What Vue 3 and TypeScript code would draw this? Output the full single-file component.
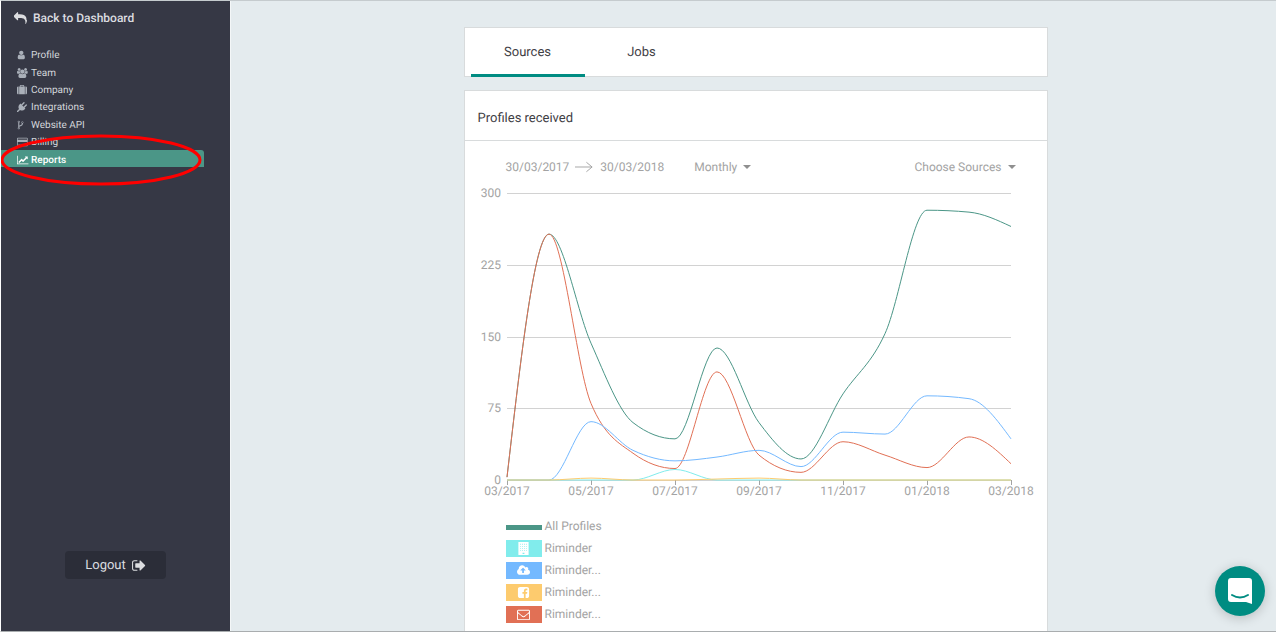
<script setup lang="ts">
import { ref } from 'vue'

interface NavItem { label: string; icon: string; box: string; active?: boolean }
interface Series { name: string; color: string; values: number[]; icon?: string; box?: string }

const icons = {
  user: 'M1280 1399q0 109-62.500 187t-150.500 78h-854q-88 0-150.500-78t-62.500-187q0-85 8.500-160.500t31.500-152 58.500-131 94-89 134.500-34.500q131 128 313 128t313-128q76 0 134.500 34.500t94 89 58.500 131 31.500 152 8.500 160.500zm-256-887q0 159-112.500 271.500t-271.500 112.500-271.500-112.500-112.500-271.500 112.500-271.500 271.500-112.500 271.500 112.500 112.500 271.500z',
  team: 'M593 896q-162 5-265 128h-134q-82 0-138-40.500t-56-118.500q0-353 124-353 6 0 43.500 21t97.500 42.500 119 21.500q67 0 133-23-5 37-5 66 0 139 81 256zm1071 637q0 120-73 189.500t-194 69.500h-874q-121 0-194-69.500t-73-189.500q0-53 3.500-103.500t14-109 26.500-108.500 43-97.500 62-81 85.500-53.500 111.500-20q10 0 43 21.500t73 48 107 48 135 21.500 135-21.500 107-48 73-48 43-21.500q61 0 111.500 20t85.500 53.500 62 81 43 97.500 26.500 108.500 14 109 3.500 103.500zm-1024-1277q0 106-75 181t-181 75-181-75-75-181 75-181 181-75 181 75 75 181zm704 384q0 159-112.500 271.500t-271.500 112.500-271.500-112.500-112.500-271.500 112.500-271.500 271.500-112.500 271.500 112.500 112.500 271.500zm576 225q0 78-56 118.500t-138 40.500h-134q-103-123-265-128 81-117 81-256 0-29-5-66 66 23 133 23 59 0 119-21.500t97.500-42.500 43.500-21q124 0 124 353zm-128-609q0 106-75 181t-181 75-181-75-75-181 75-181 181-75 181 75 75 181z',
  company: 'M640 256h512v-128h-512v128zm-352 0v1408h-64q-92 0-158-66t-66-158v-960q0-92 66-158t158-66h64zm1120 0v1408h-1024v-1408h128v-160q0-40 28-68t68-28h576q40 0 68 28t28 68v160h128zm384 224v960q0 92-66 158t-158 66h-64v-1408h64q92 0 158 66t66 158z',
  plug: 'M1755 453q37 38 37 90.500t-37 90.500l-401 400 150 150-160 160q-163 163-389.500 186.500t-411.500-100.500l-362 362h-181v-181l362-362q-124-185-100.500-411.500t186.500-389.500l160-160 150 150 400-401q38-37 91-37t90 37 37 90.500-37 90.500l-400 401 234 234 401-400q38-37 91-37t90 37z',
  fork: 'M288 1472q0-40-28-68t-68-28-68 28-28 68 28 68 68 28 68-28 28-68zm0-1152q0-40-28-68t-68-28-68 28-28 68 28 68 68 28 68-28 28-68zm640 128q0-40-28-68t-68-28-68 28-28 68 28 68 68 28 68-28 28-68zm96 0q0 52-26 96.500t-70 69.500q-2 287-226 414-67 38-203 81-128 40-169.500 71t-41.500 100v26q44 25 70 69.500t26 96.500q0 80-56 136t-136 56-136-56-56-136q0-52 26-96.500t70-69.500v-820q-44-25-70-69.500t-26-96.500q0-80 56-136t136-56 136 56 56 136q0 52-26 96.500t-70 69.500v497q54-26 154-57 55-17 87.500-29.500t70.500-31 59-39.500 40.500-51 28-69.500 8.500-91.500q-44-25-70-69.500t-26-96.500q0-80 56-136t136-56 136 56 56 136z',
  card: 'M1760 128q66 0 113 47t47 113v1216q0 66-47 113t-113 47h-1600q-66 0-113-47t-47-113v-1216q0-66 47-113t113-47h1600zm-1600 128q-13 0-22.500 9.500t-9.500 22.500v224h1664v-224q0-13-9.500-22.500t-22.500-9.500h-1600zm1600 1280q13 0 22.500-9.500t9.500-22.500v-608h-1664v608q0 13 9.500 22.500t22.500 9.500h1600zm-1504-128v-128h256v128h-256zm384 0v-128h384v128h-384z',
  chart: 'M2048 1536v128h-2048v-1536h128v1408h1920zm-128-1248v435q0 21-19.500 29.500t-35.500-7.500l-121-121-633 633q-10 10-23 10t-23-10l-233-233-416 416-192-192 585-585q10-10 23-10t23 10l233 233 464-464-121-121q-16-16-7.500-35.500t29.500-19.500h435q14 0 23 9t9 23z',
  cloud: 'M1280 864q0-14-9-23l-352-352q-9-9-23-9t-23 9l-351 351q-10 12-10 24 0 14 9 23t23 9h224v352q0 13 9.500 22.500t22.500 9.500h192q13 0 22.500-9.500t9.500-22.500v-352h224q13 0 22.500-9.500t9.500-22.500zm640 288q0 159-112.500 271.500t-271.500 112.500h-1088q-185 0-316.500-131.500t-131.500-316.500q0-130 70-240t188-165q-2-30-2-43 0-212 150-362t362-150q156 0 285.500 87t188.500 231q71-62 166-62 106 0 181 75t75 181q0 76-41 138 130 31 213.500 135.500t83.500 238.500z',
  facebook: 'M1376 128q119 0 203.500 84.500t84.500 203.500v960q0 119-84.500 203.500t-203.500 84.500h-188v-595h199l30-232h-229v-148q0-56 23.500-84t91.500-28l122-1v-207q-63-9-178-9-136 0-217.500 80t-81.500 226v171h-200v232h200v595h-532q-119 0-203.500-84.500t-84.500-203.500v-960q0-119 84.500-203.500t203.500-84.500h960z',
  mail: 'M1664 1504v-768q-32 36-69 66-268 206-426 338-51 43-83 67t-86.500 48.500-102.500 24.500h-2q-48 0-102.500-24.500t-86.500-48.500-83-67q-158-132-426-338-37-30-69-66v768q0 13 9.500 22.500t22.500 9.500h1472q13 0 22.500-9.500t9.500-22.500zm0-1051q0-37-9-53t-23-16h-1472q-13 0-22.500 9.500t-9.500 22.500q0 168 147 284 193 152 401 317 6 5 35 29.500t46 37.500 44.500 31.500 50.500 27.500 43 9h2q20 0 43-9t50.500-27.500 44.500-31.500 46-37.500 35-29.500q208-165 401-317 54-43 100.500-115.500t46.500-131.500zm128-37v1088q0 66-47 113t-113 47h-1472q-66 0-113-47t-47-113v-1088q0-66 47-113t113-47h1472q66 0 113 47t47 113z',
  building: 'M64 0h1408v1792H64zM640 1472v192h256v-192zM320 256h110v110H320zm262 0h110v110H582zm262 0h110v110H844zm262 0h110v110H1106zM320 540h110v110H320zm262 0h110v110H582zm262 0h110v110H844zm262 0h110v110H1106zM320 824h110v110H320zm262 0h110v110H582zm262 0h110v110H844zm262 0h110v110H1106zM320 1108h110v110H320zm262 0h110v110H582zm262 0h110v110H844zm262 0h110v110H1106z',
  reply: 'M1792 1120q0 166-127 451-3 7-10.500 24t-13.500 30-13 22q-12 17-28 17-15 0-23.500-10t-8.500-25q0-9 2.500-26.500t2.500-23.500q5-68 5-123 0-112-19.500-200.500t-54-153.500-89-112-117.500-79-147-48-170-24.500-189-6.500h-224v256q0 26-19 45t-45 19-45-19l-512-512q-19-19-19-45t19-45l512-512q19-19 45-19t45 19 19 45v256h224q713 0 875 403 53 134 53 333z',
  logout: 'M640 1440q0 4 1 20t.5 26.500-3 23.500-10 19.500-20.500 6.500h-320q-119 0-203.500-84.500t-84.500-203.500v-704q0-119 84.500-203.500t203.500-84.500h320q13 0 22.500 9.500t9.500 22.500q0 4 1 20t.5 26.500-3 23.500-10 19.500-20.500 6.500h-320q-66 0-113 47t-47 113v704q0 66 47 113t113 47h312l11.500 1 11.500 3 8 5.500 7 9 2 13.500zm928-544q0 26-19 45l-544 544q-19 19-45 19t-45-19-19-45v-288h-448q-26 0-45-19t-19-45v-384q0-26 19-45t45-19h448v-288q0-26 19-45t45-19 45 19l544 544q19 19 19 45z',
}

const nav: NavItem[] = [
  { label: 'Profile', icon: icons.user, box: '-128 0 1408 1792' },
  { label: 'Team', icon: icons.team, box: '0 0 1920 1792' },
  { label: 'Company', icon: icons.company, box: '0 0 1792 1792' },
  { label: 'Integrations', icon: icons.plug, box: '0 0 1792 1792' },
  { label: 'Website API', icon: icons.fork, box: '-128 0 1152 1792' },
  { label: 'Billing', icon: icons.card, box: '0 0 1920 1792' },
  { label: 'Reports', icon: icons.chart, box: '0 0 2048 1792', active: true },
]

const series: Series[] = [
  { name: 'All Profiles', color: '#4b9687', values: [3, 257, 143, 60, 43, 138, 60, 22, 90, 153, 282, 280, 265] },
  { name: 'Riminder', color: '#81ecec', values: [0, 0, 0, 0, 11, 0, 0, 0, 0, 0, 0, 0, 0], icon: icons.building, box: '0 0 1536 1792' },
  { name: 'Riminder...', color: '#74b9ff', values: [0, 0, 61, 31, 20, 24, 31, 14, 50, 48, 88, 85, 43], icon: icons.cloud, box: '0 0 1920 1792' },
  { name: 'Riminder...', color: '#fdcb6e', values: [0, 0, 2, 0, 0, 1, 2, 0, 0, 0, 0, 0, 0], icon: icons.facebook, box: '0 0 1792 1792' },
  { name: 'Riminder...', color: '#e17055', values: [3, 257, 80, 28, 12, 113, 26, 8, 40, 26, 13, 45, 17], icon: icons.mail, box: '0 0 1792 1792' },
]
const drawn = [series[0], series[4], series[2], series[1], series[3]]

const left = 42
const step = 42
const base = 300
const scale = 287 / 300
const ticks = [300, 225, 150, 75, 0]
const months = ['03/2017', '05/2017', '07/2017', '09/2017', '11/2017', '01/2018', '03/2018']
const yOf = (v: number) => Math.round(base - v * scale)

// Monotone cubic interpolation: the curve never overshoots its points.
function curve(values: number[]): string {
  const y = values.map(v => base - v * scale)
  const n = y.length
  const d = y.slice(1).map((v, i) => (v - y[i]) / step)
  const m = y.map((_, i) => {
    if (i === 0 || i === n - 1) return 0
    const a = d[i - 1]
    const b = d[i]
    return (Math.sign(a) + Math.sign(b)) * Math.min(Math.abs(a), Math.abs(b), Math.abs(a + b) / 4) || 0
  })
  m[0] = (3 * d[0] - m[1]) / 2
  m[n - 1] = (3 * d[n - 2] - m[n - 2]) / 2
  let path = `M${left},${y[0]}`
  for (let i = 1; i < n; i++) {
    const x0 = left + (i - 1) * step
    const x1 = x0 + step
    const t = step / 3
    path += `C${x0 + t},${y[i - 1] + m[i - 1] * t} ${x1 - t},${y[i] - m[i] * t} ${x1},${y[i]}`
  }
  return path
}

const tab = ref('Sources')
</script>

<template>
  <div class="app">
    <aside class="sidebar">
      <a class="back" href="#">
        <svg viewBox="0 0 1792 1792" aria-hidden="true"><path :d="icons.reply" /></svg>
        Back to Dashboard
      </a>
      <nav class="nav">
        <a v-for="item in nav" :key="item.label" href="#" :class="{ active: item.active }">
          <svg :viewBox="item.box" preserveAspectRatio="xMinYMid" aria-hidden="true"><path :d="item.icon" /></svg>
          <span>{{ item.label }}</span>
        </a>
        <svg class="ring" viewBox="0 0 204 52" aria-hidden="true">
          <ellipse cx="101" cy="26" rx="99" ry="24" />
        </svg>
      </nav>
      <button class="logout" type="button">
        Logout
        <svg viewBox="0 0 1664 1792" aria-hidden="true"><path :d="icons.logout" /></svg>
      </button>
    </aside>

    <main class="main">
      <div class="column">
        <div class="tabs card" role="tablist">
          <button
            v-for="name in ['Sources', 'Jobs']"
            :key="name"
            type="button"
            role="tab"
            :aria-selected="tab === name"
            :class="{ selected: tab === name }"
            @click="tab = name"
          >{{ name }}</button>
        </div>

        <section class="report card">
          <h1>Profiles received</h1>
          <div class="filters">
            <button type="button" class="range">
              30/03/2017
              <svg viewBox="0 0 20 12" aria-hidden="true"><path d="M0 6h18M12 1l6 5-6 5" /></svg>
              30/03/2018
            </button>
            <button type="button" class="drop">Monthly</button>
            <button type="button" class="drop sources">Choose Sources</button>
          </div>

          <svg class="chart" viewBox="0 7 582 320" role="img" aria-label="Profiles received per month">
            <g v-for="t in ticks" :key="t">
              <line class="grid" :x1="left" x2="546" :y1="yOf(t)" :y2="yOf(t)" />
              <text x="36" :y="yOf(t) + 4" text-anchor="end">{{ t }}</text>
            </g>
            <g v-for="(label, i) in months" :key="label">
              <line class="tick" :x1="left + i * 84" :x2="left + i * 84" y1="300" y2="305" />
              <text :x="left + i * 84" y="315" text-anchor="middle">{{ label }}</text>
            </g>
            <path v-for="(s, i) in drawn" :key="i" class="line" :d="curve(s.values)" :stroke="s.color" />
          </svg>

          <ul class="legend">
            <li v-for="(s, i) in series" :key="i">
              <span class="swatch" :class="{ thin: !s.icon }" :style="{ background: s.color }">
                <svg v-if="s.icon" :viewBox="s.box" aria-hidden="true"><path fill-rule="evenodd" :d="s.icon" /></svg>
              </span>
              {{ s.name }}
            </li>
          </ul>
        </section>
      </div>
    </main>

    <button class="chat" type="button" aria-label="Open chat">
      <svg viewBox="0 0 24 28" aria-hidden="true">
        <path class="bubble" d="M3 1h18a3 3 0 0 1 3 3v23l-6-2H3a3 3 0 0 1-3-3V4a3 3 0 0 1 3-3z" />
        <path class="smile" d="M4 18q8 5 16 0" />
      </svg>
    </button>
  </div>
</template>

<style>
body {
  background: #e4ebee;
}
</style>

<style scoped>
.app {
  display: flex;
  height: 100vh;
  overflow: hidden;
  box-sizing: border-box;
  border-top: 1px solid #c5cbce;
  border-bottom: 1px solid #a9adaf;
  border-left: 1px solid #fff;
  font-family: Roboto, "Liberation Sans", sans-serif;
  text-rendering: geometricPrecision;
  color: #3f4045;
}
button {
  border: 0;
  background: none;
  padding: 0;
  font: inherit;
  color: inherit;
  text-rendering: inherit;
  cursor: pointer;
}
a {
  color: inherit;
  text-decoration: none;
}
.sidebar {
  flex: 0 0 229px;
  display: flex;
  flex-direction: column;
  background: #363845;
  border-right: 1px solid #f4f7f8;
  color: #dcdde0;
}
.back {
  display: flex;
  align-items: center;
  gap: 6px;
  padding: 8px 0 0 13px;
  font-size: 12px;
  font-weight: 500;
  line-height: 18px;
}
.back svg {
  width: 13px;
  height: 13px;
  fill: currentColor;
}
.nav {
  position: relative;
  display: grid;
  grid-auto-rows: 1fr;
  height: 122px;
  width: 203px;
  margin-top: 18px;
  font-size: 10px;
  line-height: 12px;
  color: #d4d7db;
}
.nav a {
  display: flex;
  align-items: center;
  gap: 2px;
  padding: 5px 0 0 16px;
}
.nav a svg {
  width: 12px;
  height: 10px;
  margin-bottom: 2px;
  fill: #aab0b9;
}
.nav a.active {
  background: #4b9687;
  border-radius: 0 3px 0 0;
  color: #fff;
  font-weight: 500;
}
.nav a.active svg {
  fill: #fff;
}
.ring {
  position: absolute;
  left: -1px;
  bottom: -19px;
  width: 204px;
  height: 52px;
  overflow: visible;
  pointer-events: none;
}
.ring ellipse {
  fill: none;
  stroke: #f00;
  stroke-width: 3;
}
.logout {
  display: flex;
  align-items: center;
  justify-content: center;
  gap: 6px;
  align-self: center;
  width: 101px;
  height: 28px;
  margin-top: auto;
  margin-bottom: 52px;
  border-radius: 4px;
  background: #2b2d38;
  font-size: 13px;
}
.logout svg {
  width: 14px;
  height: 15px;
  fill: currentColor;
}
.main {
  flex: 1;
  min-width: 0;
  padding: 26px 0 0 4px;
}
.column {
  width: 56%;
  min-width: 584px;
  margin: 0 auto;
}
.card {
  background: #fff;
  border: 1px solid #d8dbdc;
}
.tabs {
  display: flex;
  height: 48px;
  padding-left: 6px;
  margin-bottom: 13px;
}
.tabs button {
  width: 114px;
  padding-top: 3px;
  border-bottom: 3px solid transparent;
  margin-bottom: -1px;
  font-size: 13px;
}
.tabs .selected {
  border-color: #008c82;
}
.report h1 {
  margin: 0;
  padding: 7px 13px 0;
  border-bottom: 1px solid #d8dbdc;
  font-size: 13px;
  font-weight: 400;
  line-height: 42px;
}
.filters {
  display: flex;
  align-items: center;
  height: 40px;
  padding: 6px 31px 0 41px;
  color: #a3a3a3;
  font-size: 12px;
}
.range {
  display: flex;
  align-items: center;
  gap: 6px;
  margin-right: 30px;
}
.range svg {
  width: 19px;
  height: 12px;
  fill: none;
  stroke: #a3a3a3;
}
.drop {
  display: flex;
  align-items: center;
  gap: 6px;
}
.drop::after {
  content: "";
  border: 4px solid transparent;
  border-top-color: #8f8f8f;
  border-bottom: 0;
}
.sources {
  margin-left: auto;
}
.chart {
  display: block;
  width: 100%;
  overflow: visible;
}
.chart text {
  fill: #a3a3a3;
  font-size: 12px;
}
.grid,
.tick {
  stroke: #d2d2d2;
  shape-rendering: crispEdges;
}
.tick {
  stroke: #a3a3a3;
}
.line {
  fill: none;
  stroke-width: 1;
}
.legend {
  display: grid;
  gap: 4px;
  margin: 0;
  padding: 10px 0 20px 41px;
  list-style: none;
  color: #a3a3a3;
  font-size: 12px;
}
.legend li {
  display: flex;
  align-items: center;
  gap: 3px;
  height: 18px;
}
.swatch {
  display: flex;
  align-items: center;
  justify-content: center;
  width: 36px;
  height: 17px;
}
.swatch.thin {
  height: 5px;
  margin-top: 3px;
}
.swatch svg {
  width: 13px;
  height: 13px;
  fill: #fff;
}
.chat {
  position: fixed;
  right: 11px;
  bottom: 16px;
  display: flex;
  align-items: center;
  justify-content: center;
  width: 50px;
  height: 50px;
  border-radius: 50%;
  background: #008c82;
  box-shadow: 0 2px 12px rgba(0, 0, 0, 0.2);
}
.chat svg {
  width: 24px;
  height: 28px;
}
.bubble {
  fill: #fff;
}
.smile {
  fill: none;
  stroke: #008c82;
  stroke-width: 2;
  stroke-linecap: round;
}
</style>
